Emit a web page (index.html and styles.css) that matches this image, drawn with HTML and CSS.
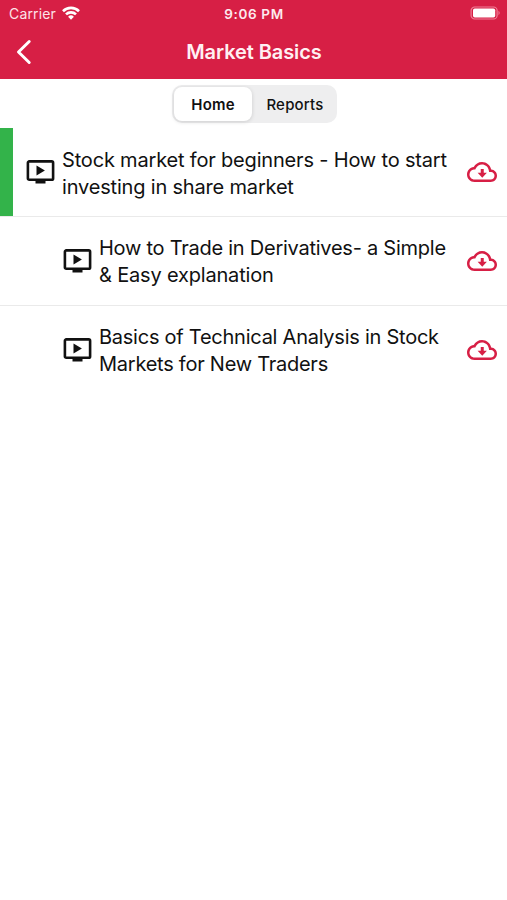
FILE: index.html
```html
<!DOCTYPE html>
<html lang="en">
<head>
<meta charset="utf-8">
<title>Market Basics</title>
<link rel="stylesheet" href="styles.css">
</head>
<body>
<svg class="defs" aria-hidden="true">
  <symbol id="video" viewBox="0 0 28 24">
    <rect x="1.4" y="1.4" width="25.2" height="18.4" rx="1.4" fill="none" stroke="currentColor" stroke-width="2.6"/>
    <path d="M10 5.6v10l8.4-5zM9 20h10v3.4H9z" fill="currentColor"/>
  </symbol>
  <symbol id="cloud" viewBox="0 0 24 24">
    <path d="M19.35 10.04C18.67 6.59 15.64 4 12 4 9.11 4 6.6 5.64 5.35 8.04 2.34 8.36 0 10.91 0 14c0 3.31 2.69 6 6 6h13c2.76 0 5-2.24 5-5 0-2.64-2.05-4.78-4.65-4.96zM19 18H6c-2.21 0-4-1.79-4-4 0-2.05 1.53-3.76 3.56-3.97l1.07-.11.5-.95C8.08 7.14 9.94 6 12 6c2.62 0 4.88 1.86 5.39 4.43l.3 1.5 1.53.11c1.56.1 2.78 1.41 2.78 2.96 0 1.65-1.35 3-3 3zM11 9.6h2.4v3h2.5l-3.7 3.9-3.7-3.9H11z" fill="currentColor"/>
  </symbol>
</svg>
<header class="header">
  <div class="status">
    <div class="carrier">Carrier
      <svg class="wifi" viewBox="0 0 18 14" fill="none" stroke="currentColor" stroke-width="2.6"><path d="M1 5.2a11.4 11.4 0 0 1 16 0M4 8.4a7.1 7.1 0 0 1 10 0"/><path d="M9 13.8l-2.9-3a4.1 4.1 0 0 1 5.8 0z" fill="currentColor" stroke="none"/></svg>
    </div>
    <div class="time">9:06 PM</div>
    <svg class="battery" viewBox="0 0 32 14"><rect x="1.1" y="1" width="26" height="12" rx="3.6" fill="none" stroke="#f07f98" stroke-width="1.2"/><rect x="3" y="2.4" width="22.2" height="9.2" rx="1.8" fill="#fff"/><path d="M28.5 4.8q2.4 2.2 0 4.4z" fill="#f07f98"/></svg>
  </div>
  <div class="nav">
    <svg class="back" viewBox="0 0 16 26"><path d="M13.2 2.5 2.5 13l10.7 10.5" fill="none" stroke="currentColor" stroke-width="3" stroke-linecap="round" stroke-linejoin="round"/></svg>
    <h1 class="title">Market Basics</h1>
  </div>
</header>
<nav class="tabs"><span class="tab active">Home</span><span class="tab">Reports</span></nav>
<main class="list">
  <article class="row current">
    <svg class="video"><use href="#video"/></svg>
    <p class="text"><span class="normal">Stock market for beginners - How to start</span><br><span class="normal">investing in share market</span></p>
    <svg class="cloud"><use href="#cloud"/></svg>
  </article>
  <article class="row nested">
    <svg class="video"><use href="#video"/></svg>
    <p class="text"><span class="tight">How to Trade in Derivatives- a Simple</span><br><span class="normal">&amp; Easy explanation</span></p>
    <svg class="cloud"><use href="#cloud"/></svg>
  </article>
  <article class="row nested last">
    <svg class="video"><use href="#video"/></svg>
    <p class="text"><span class="tight">Basics of Technical Analysis in Stock</span><br><span class="tight">Markets for New Traders</span></p>
    <svg class="cloud"><use href="#cloud"/></svg>
  </article>
</main>
</body>
</html>
```
FILE: styles.css
```css
* { box-sizing: border-box; }
body { margin: 0; background: #fff; color: #111; font-family: Inter, "Liberation Sans", sans-serif; }
.defs { display: block; width: 0; height: 0; }
.header { height: 79px; background: #d71f45; color: #fff; }
.status { height: 27px; display: grid; grid-template-columns: 1fr auto 1fr; align-items: center; padding: 0 6px 0 9px; font-size: 14px; }
.carrier { display: flex; align-items: center; gap: 6px; color: #fde3e8; letter-spacing: 0.15px; }
.wifi { width: 18px; height: 14px; color: #fff; margin-top: -1px; }
.time { font-size: 13.5px; font-weight: 600; color: #fdeaee; letter-spacing: 0.65px; margin-left: -2px; }
.battery { width: 32px; height: 14px; justify-self: end; margin-top: -1px; margin-right: -1px; }
.nav { height: 50px; display: grid; grid-template-columns: 1fr auto 1fr; align-items: center; padding: 0 16px; }
.back { width: 16px; height: 26px; }
.title { grid-column: 2; margin: 0; font-size: 20px; line-height: 26px; font-weight: 600; letter-spacing: -0.08px; color: #fff0f3; padding-left: 1px; }
.tabs { width: 165px; height: 38px; margin: 6px 0 5px 172px; padding: 2px; display: flex; border-radius: 10px; background: #eeeeef; }
.tab { flex: 1; display: flex; align-items: center; justify-content: center; font-size: 15px; font-weight: 500; letter-spacing: 0.2px; padding-left: 3px; }
.active { flex: 0 0 78px; border-radius: 8px; background: #fff; font-weight: 600; padding-left: 0; box-shadow: 0 1px 4px rgba(0,0,0,.14); }
.row { height: 89px; display: flex; align-items: center; padding: 0 10px 0 26px; border-bottom: 1px solid #eaeaea; }
.current { padding-left: 13px; background: linear-gradient(#33b34a, #33b34a) left / 13px 100% no-repeat; padding-left: 26px; }
.nested { height: 88.5px; padding-left: 63px; }
.last { border-bottom: 0; }
.video { flex: none; width: 29px; height: 24px; color: #111; margin-right: 7px; }
.text { flex: 1; margin: 0; padding-top: 3px; font-size: 20px; line-height: 27px; white-space: nowrap; }
.normal { letter-spacing: -0.18px; }
.tight { letter-spacing: -0.25px; }
.cloud { flex: none; width: 30px; height: 30px; color: #d71f45; }
```
